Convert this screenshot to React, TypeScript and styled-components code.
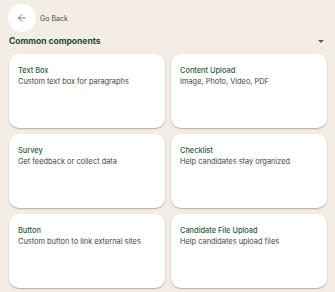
import React from 'react';
import styled, { createGlobalStyle } from 'styled-components';

const GlobalStyle = createGlobalStyle`
  html, body {
    margin: 0;
    padding: 0;
    background: #f3ede6;
    font-family: Inter, "Liberation Sans", sans-serif;
  }
`;

const Page = styled.div`
  width: 335px;
  height: 292px;
  box-sizing: border-box;
  padding: 4px 8px 0 9px;
  background: #f3ede6;
  overflow: hidden;
`;

const BackRow = styled.div`
  display: flex;
  align-items: center;
  gap: 4px;
  margin-left: -1px;
`;

const BackButton = styled.button`
  width: 28px;
  height: 28px;
  border-radius: 50%;
  border: none;
  background: #ffffff;
  display: flex;
  align-items: center;
  justify-content: center;
  padding: 0;
  cursor: pointer;
`;

const BackLabel = styled.span`
  font-size: 7px;
  color: #4a4a4a;
`;

const SectionHeader = styled.div`
  display: flex;
  justify-content: space-between;
  align-items: center;
  height: 14px;
  margin-top: 2px;
  margin-bottom: 6px;
`;

const SectionTitle = styled.h2`
  margin: 0;
  font-size: 8.5px;
  font-weight: 700;
  color: #1d4a2f;
`;

const Caret = styled.span`
  width: 0;
  height: 0;
  margin-right: 3px;
  border-left: 3px solid transparent;
  border-right: 3px solid transparent;
  border-top: 3.5px solid #5a5a5a;
`;

const Grid = styled.div`
  display: grid;
  grid-template-columns: 1fr 1fr;
  grid-auto-rows: 74px;
  gap: 6px;
`;

const Card = styled.div`
  background: #ffffff;
  border-radius: 10px;
  box-shadow: 0 1px 1.5px rgba(0, 0, 0, 0.28);
  padding: 12px 9px;
  box-sizing: border-box;
`;

const CardTitle = styled.div`
  font-size: 7.4px;
  font-weight: 500;
  color: #2a5a43;
  margin-bottom: 2px;
`;

const CardText = styled.div`
  font-size: 7.4px;
  color: #444444;
`;

const components = [
  { title: 'Text Box', text: 'Custom text box for paragraphs' },
  { title: 'Content Upload', text: 'Image, Photo, Video, PDF' },
  { title: 'Survey', text: 'Get feedback or collect data' },
  { title: 'Checklist', text: 'Help candidates stay organized' },
  { title: 'Button', text: 'Custom button to link external sites' },
  { title: 'Candidate File Upload', text: 'Help candidates upload files' },
];

export default function App() {
  return (
    <Page>
      <GlobalStyle />
      <BackRow>
        <BackButton aria-label="Go back">
          <svg width="12" height="12" viewBox="0 0 24 24" fill="none" stroke="#6a6a6a" strokeWidth="1.7" strokeLinecap="round" strokeLinejoin="round">
            <path d="M19 12H5" />
            <path d="M12 19l-7-7 7-7" />
          </svg>
        </BackButton>
        <BackLabel>Go Back</BackLabel>
      </BackRow>
      <SectionHeader>
        <SectionTitle>Common components</SectionTitle>
        <Caret />
      </SectionHeader>
      <Grid>
        {components.map((c) => (
          <Card key={c.title}>
            <CardTitle>{c.title}</CardTitle>
            <CardText>{c.text}</CardText>
          </Card>
        ))}
      </Grid>
    </Page>
  );
}
